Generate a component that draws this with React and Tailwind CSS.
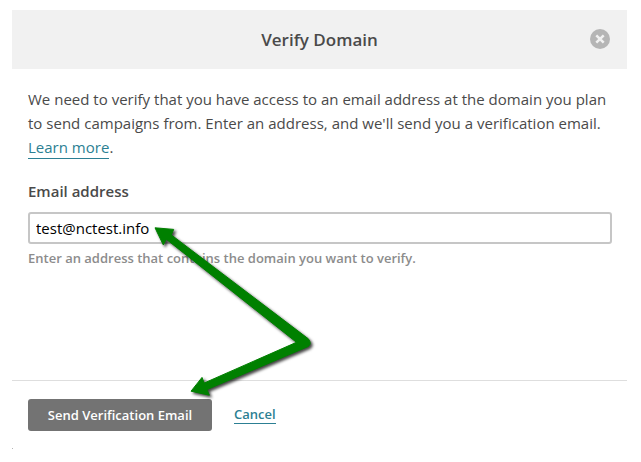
import React, { useState } from 'react';

function Header() {
  return (
    <div className="flex h-[59px] items-center bg-[#f1f1f1] pr-[17px] pl-[27px]">
      <h1 className="flex-1 pt-px pl-[10px] text-center text-[17px] leading-6 font-semibold">Verify Domain</h1>
      <button type="button" aria-label="Close" className="-mt-px">
        <svg width="20" height="20" viewBox="0 0 20 20" className="block">
          <circle cx="10" cy="10" r="10" fill="#b5b5b5" />
          <path d="M6.3 6.3l7.4 7.4M13.7 6.3l-7.4 7.4" stroke="#f1f1f1" strokeWidth="2.5" />
        </svg>
      </button>
    </div>
  );
}

// double headed pointer drawn over the dialog
function Pointer() {
  return (
    <svg
      width="180"
      height="190"
      viewBox="145 215 180 190"
      className="pointer-events-none absolute top-[215px] left-[145px] drop-shadow-[2px_2px_1.5px_rgba(0,0,0,0.75)]"
    >
      <path
        d="M155 227.8L173.7 229.4L171.3 234.9L308.3 338.8Q312.3 344 308 346.6L206.9 389.6L209.4 395.2L191 391.2L202 377.4L204.2 383L296.5 342.3L166.3 239.2L163.3 244.9Z"
        fill="#008000"
        stroke="#008000"
        strokeWidth="1"
        strokeLinejoin="round"
      />
    </svg>
  );
}

function App() {
  const [email, setEmail] = useState('test@nctest.info');

  return (
    <div className="relative h-[462px] w-[641px] overflow-hidden bg-white pt-[10px] pr-[14px] pl-3 font-['Open_Sans',sans-serif] text-[#4a4a4a]">
      <Header />

      <div className="h-[311px] px-4 pt-[18px]">
        <p className="text-[15px] leading-6 tracking-[0.01px] whitespace-nowrap">
          We need to verify that you have access to an email address at the domain you plan
          <br />
          to send campaigns from. Enter an address, and we'll send you a verification email.
          <br />
          <a href="#" className="border-b border-[#2c7f93] pb-px text-[#2c7f93]">Learn more</a>.
        </p>

        <label htmlFor="email" className="mt-5 block text-[15px] leading-6 font-semibold">
          Email address
        </label>
        <input
          id="email"
          type="text"
          value={email}
          onChange={(e) => setEmail(e.target.value)}
          className="mt-[9px] block h-8 w-[584px] rounded-[3px] border-2 border-[#c6c6c6] px-1.5 text-[15px] text-black outline-none"
        />
        <p className="mt-[5px] text-[13px] leading-[18px] font-semibold text-[#8c8c8c]">
          Enter an address that contains the domain you want to verify.
        </p>
      </div>

      <div className="flex items-start border-t border-[#dedede] px-4 pt-[18px]">
        <button type="button" className="h-8 w-[184px] rounded-[3px] bg-[#737373] pt-px text-[13px] font-semibold text-white">
          Send Verification Email
        </button>
        <a href="#" className="mt-[6px] ml-[22px] border-b border-[#2c7f93] text-[13px] leading-[18px] font-semibold text-[#2c7f93]">
          Cancel
        </a>
      </div>
      <div className="mt-[17px] h-px w-px bg-[#b5b5b5]" />

      <Pointer />
    </div>
  );
}

export default App;
